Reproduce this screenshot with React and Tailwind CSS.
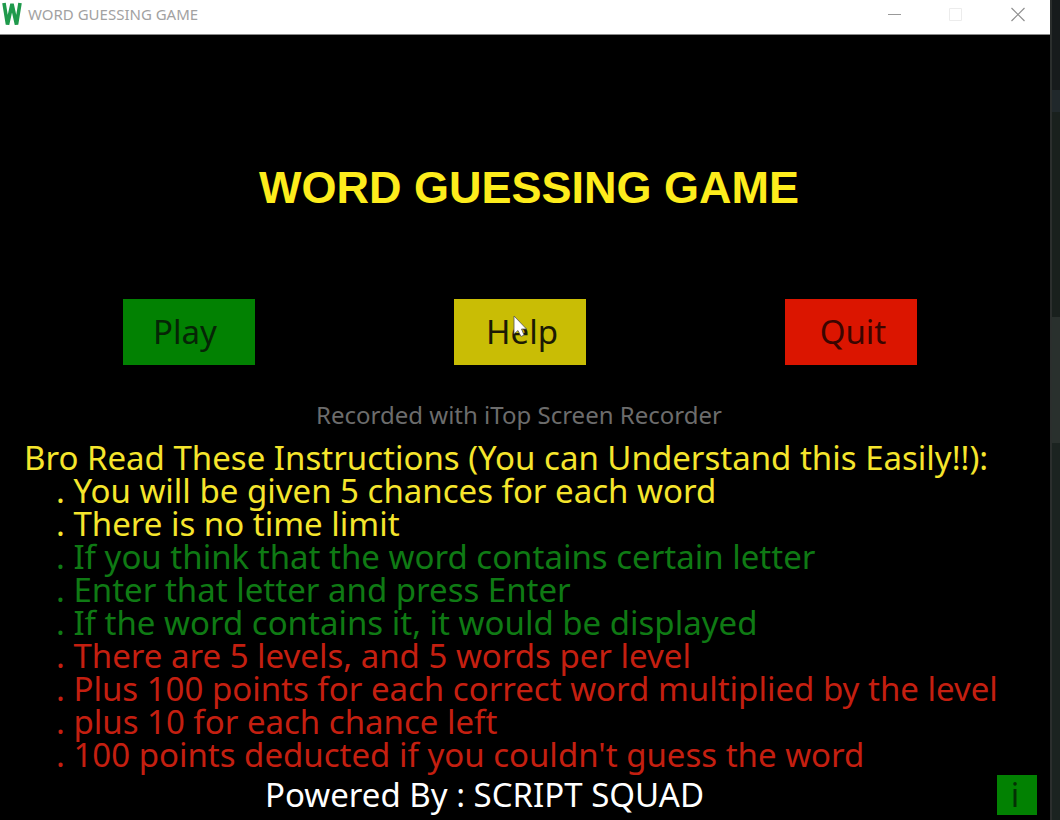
const instructions = [
  { text: "You will be given 5 chances for each word", tone: "text-[#f5e52c]" },
  { text: "There is no time limit", tone: "text-[#f5e52c]" },
  { text: "If you think that the word contains certain letter", tone: "text-[#0f7a14]" },
  { text: "Enter that letter and press Enter", tone: "text-[#0f7a14]" },
  { text: "If the word contains it, it would be displayed", tone: "text-[#0f7a14]" },
  { text: "There are 5 levels, and 5 words per level", tone: "text-[#c41f10]" },
  { text: "Plus 100 points for each correct word multiplied by the level", tone: "text-[#c41f10]" },
  { text: "plus 10 for each chance left", tone: "text-[#c41f10]" },
  { text: "100 points deducted if you couldn't guess the word", tone: "text-[#c41f10]" },
];

function TitleBar() {
  return (
    <header className="flex h-[35px] items-center border-b border-[#8a8a8a] bg-white pr-6 pb-1.5">
      <svg className="h-6 w-6" viewBox="0 0 24 24" fill="none" aria-hidden="true">
        <path d="M4 1L7.500 22.500L12 2L16.500 22.500L20 1" stroke="#1f9a4c" strokeWidth="3.600" strokeLinejoin="bevel" />
      </svg>
      <span className="ml-1 font-['Noto_Sans',sans-serif] text-[15px] leading-5 text-[#a2a2a2]">
        WORD GUESSING GAME
      </span>
      <div className="ml-auto flex items-center gap-[46px]">
        <button type="button" aria-label="Minimize">
          <svg className="h-4 w-4" viewBox="0 0 16 16" stroke="#999" aria-hidden="true">
            <path d="M2 8.500H15" />
          </svg>
        </button>
        <button type="button" aria-label="Maximize" disabled>
          <svg className="h-4 w-4" viewBox="0 0 16 16" fill="none" stroke="#ececec" aria-hidden="true">
            <path d="M1.500 2.500H13.500V14.500H1.500Z" />
          </svg>
        </button>
        <button type="button" aria-label="Close">
          <svg className="h-4 w-4" viewBox="0 0 16 16" stroke="#8f8f8f" strokeWidth="1.200" aria-hidden="true">
            <path d="M1.500 2L14.500 15M14.500 2L1.500 15" />
          </svg>
        </button>
      </div>
    </header>
  );
}

function Pointer() {
  return (
    <svg className="absolute top-4 left-[59px] h-6 w-4" viewBox="0 0 16 24" aria-hidden="true">
      <path d="M1 1V19L5 15.500L8 21.500L11 20L8.500 14H13.500Z" fill="#fff" stroke="#555" strokeWidth="0.800" />
    </svg>
  );
}

export default function App() {
  return (
    <div className="flex min-h-screen bg-black font-['Comic_Sans_MS','Noto_Sans',sans-serif]">
      <div className="flex min-w-0 flex-1 flex-col">
        <TitleBar />
        <main className="flex flex-1 flex-col">
          <h1 className="mt-32 pl-2 text-center font-['Liberation_Sans',Arial,sans-serif] text-[45px] leading-[50px] font-bold text-[#fdec1c]">
            WORD GUESSING GAME
          </h1>
          <div className="mt-[86px] flex justify-between pr-[133px] pl-[123px] text-[33px] leading-[66px]">
            <button type="button" className="h-[66px] w-[132px] bg-[#028102] pr-2 text-[#062506]">Play</button>
            <button type="button" className="relative h-[66px] w-[132px] bg-[#c9bd05] pl-1 text-[#1c1a04]">
              Help
              <Pointer />
            </button>
            <button type="button" className="h-[66px] w-[132px] bg-[#db1500] pl-1 text-[#3a0500]">Quit</button>
          </div>
          <p className="mt-8 pr-3 text-center font-['Noto_Sans',sans-serif] text-2xl leading-9 text-[#6c6c6c]">
            Recorded with iTop Screen Recorder
          </p>
          <section className="mt-2 text-[33px] leading-[33px] whitespace-nowrap">
            <h2 className="pl-6 text-[#f5e52c]">
              Bro Read These Instructions (You can Understand this Easily!!):
            </h2>
            <ul className="pl-14">
              {instructions.map((line) => (
                <li key={line.text} className={line.tone}>. {line.text}</li>
              ))}
            </ul>
          </section>
          <footer className="flex items-center pt-1 pr-[13px] text-[33px] leading-10 text-white">
            <p className="flex-1 pr-7 text-center">Powered By : SCRIPT SQUAD</p>
            <button type="button" aria-label="Information" className="size-10 bg-[#028102] pr-1 text-[#043004]">i</button>
          </footer>
        </main>
      </div>
      <aside className="flex w-[10px] flex-col border-l-2 border-[#2b2e2d] bg-[#1b2320]" aria-hidden="true">
        <div className="h-[90px] bg-[#171b1c]" />
        <div className="h-[22px] bg-[#20282b]" />
        <div className="h-[205px] bg-[#19201d]" />
        <div className="h-[126px] bg-[#29302d]" />
      </aside>
    </div>
  );
}
